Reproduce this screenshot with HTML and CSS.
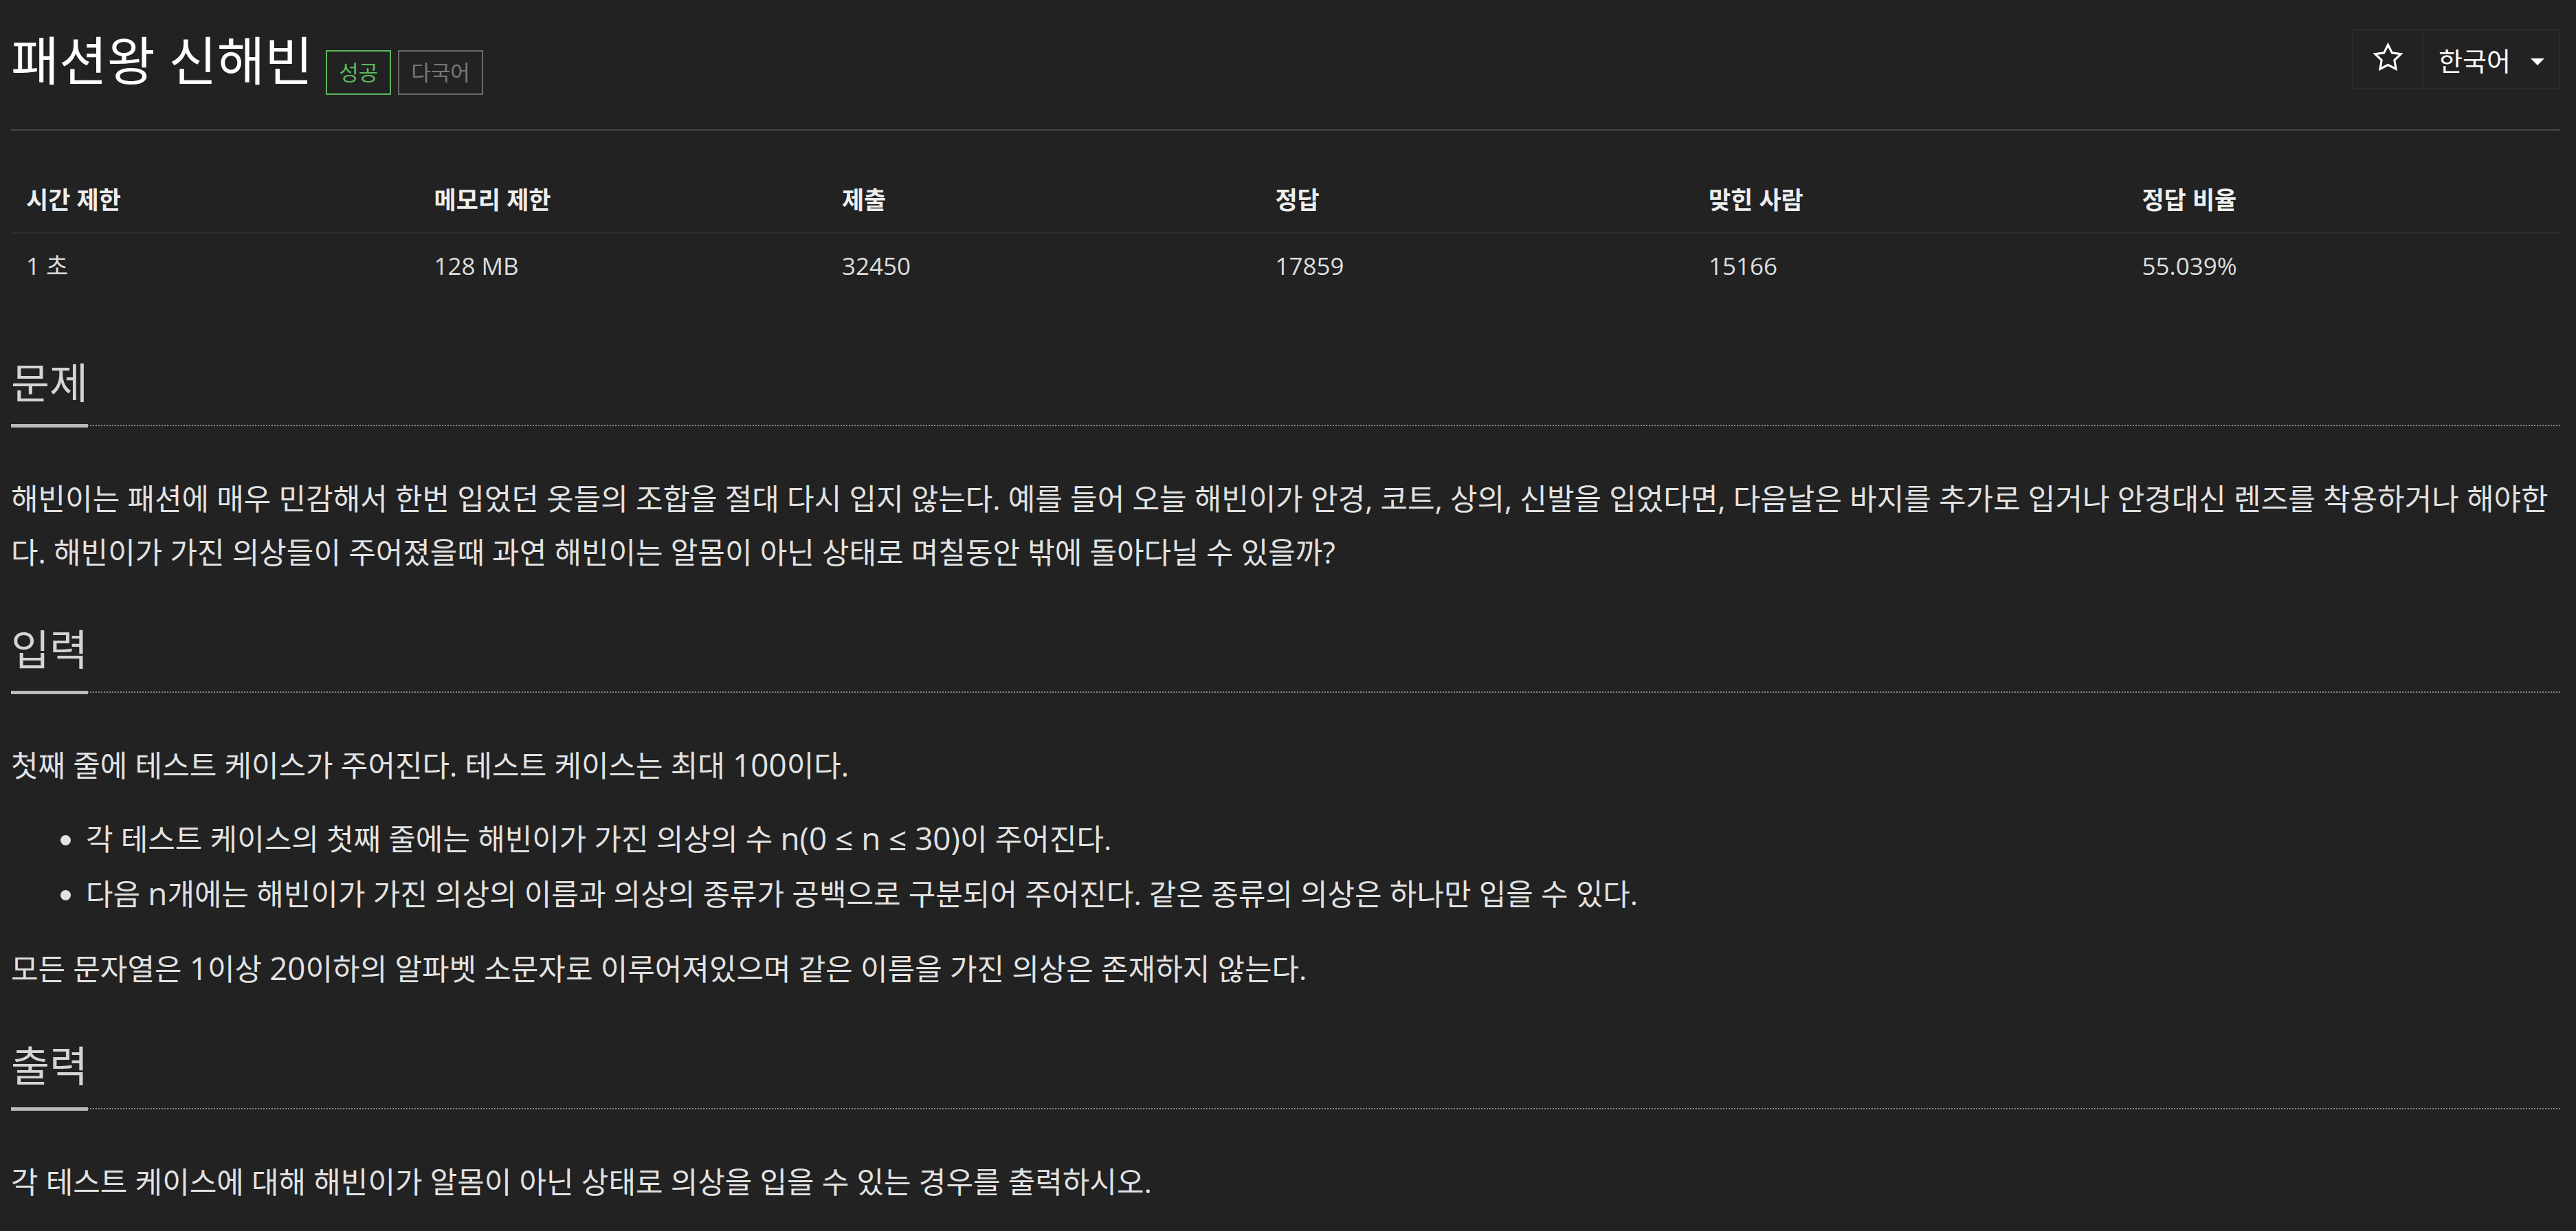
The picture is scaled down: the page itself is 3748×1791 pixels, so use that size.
FILE: index.html
```html
<!DOCTYPE html>
<html lang="ko">
<head>
<meta charset="utf-8">
<title>패션왕 신해빈</title>
<link rel="stylesheet" href="styles.css">
</head>
<body>
<div class="page">
  <header class="page-header">
    <h1 class="title">
      <span class="title-text">패션왕 신해빈</span>
      <span class="label label-ac">성공</span>
      <span class="label label-multi">다국어</span>
    </h1>
    <div class="btn-group">
      <button class="btn btn-star" type="button">
        <svg class="star" width="47" height="47" viewBox="0 0 24 24"><polygon points="12,2.6 14.95,8.6 21.5,9.5 16.75,14.1 17.9,20.6 12,17.5 6.1,20.6 7.25,14.1 2.5,9.5 9.05,8.6" fill="none" stroke="#fff" stroke-width="1.6" stroke-linejoin="miter"/></svg>
      </button>
      <button class="btn btn-lang" type="button"><span>한국어</span><span class="caret"></span></button>
    </div>
  </header>

  <table class="info">
    <thead>
      <tr>
        <th class="w16">시간 제한</th>
        <th class="w16">메모리 제한</th>
        <th class="w17">제출</th>
        <th class="w17">정답</th>
        <th class="w17">맞힌 사람</th>
        <th class="w17">정답 비율</th>
      </tr>
    </thead>
    <tbody>
      <tr>
        <td>1 초</td>
        <td>128 MB</td>
        <td>32450</td>
        <td>17859</td>
        <td>15166</td>
        <td>55.039%</td>
      </tr>
    </tbody>
  </table>

  <section class="problem-section">
    <div class="headline"><h2>문제</h2></div>
    <p>해빈이는 패션에 매우 민감해서 한번 입었던 옷들의 조합을 절대 다시 입지 않는다. 예를 들어 오늘 해빈이가 안경, 코트, 상의, 신발을 입었다면, 다음날은 바지를 추가로 입거나 안경대신 렌즈를 착용하거나 해야한다. 해빈이가 가진 의상들이 주어졌을때 과연 해빈이는 알몸이 아닌 상태로 며칠동안 밖에 돌아다닐 수 있을까?</p>
  </section>

  <section class="problem-section">
    <div class="headline"><h2>입력</h2></div>
    <p>첫째 줄에 테스트 케이스가 주어진다. 테스트 케이스는 최대 <span class="en">100</span>이다.</p>
    <ul>
      <li>각 테스트 케이스의 첫째 줄에는 해빈이가 가진 의상의 수 <span class="en">n(0 ≤ n ≤ 30)</span>이 주어진다.</li>
      <li>다음 <span class="en">n</span>개에는 해빈이가 가진 의상의 이름과 의상의 종류가 공백으로 구분되어 주어진다. 같은 종류의 의상은 하나만 입을 수 있다.</li>
    </ul>
    <p>모든 문자열은 <span class="en">1</span>이상 <span class="en">20</span>이하의 알파벳 소문자로 이루어져있으며 같은 이름을 가진 의상은 존재하지 않는다.</p>
  </section>

  <section class="problem-section">
    <div class="headline"><h2>출력</h2></div>
    <p>각 테스트 케이스에 대해 해빈이가 알몸이 아닌 상태로 의상을 입을 수 있는 경우를 출력하시오.</p>
  </section>
</div>
</body>
</html>
```

FILE: styles.css
```css
html, body {
  background: #222222;
}

body {
  margin: 0;
  padding: 0 23px 0 16px;
  color: #e2e2e2;
  font-family: "Open Sans", "Noto Sans CJK KR", sans-serif;
}

/* ---------- header ---------- */
.page-header {
  display: flex;
  justify-content: space-between;
  align-items: flex-start;
  padding: 42px 0 50px;
  border-bottom: 2px solid #474747;
}

.title {
  display: flex;
  align-items: baseline;
  margin: 2px 0 0;
  font-weight: 400;
  color: #ffffff;
}

.title-text {
  font-size: 76px;
  line-height: 87px;
}

.label {
  font-size: 31px;
  line-height: 61px;
  padding: 0 17px;
  border: 2px solid;
  margin-left: 10px;
}

.label-ac {
  color: #5cb85c;
  border-color: #5cb85c;
  margin-left: 19px;
}

.label-multi {
  color: #777777;
  border-color: #6b6b6b;
}

.btn-group {
  display: flex;
  box-sizing: border-box;
  height: 88px;
  border: 2px solid #2c2c2c;
}

.btn {
  display: flex;
  align-items: center;
  padding: 0;
  border: 0;
  background: transparent;
  color: #ffffff;
  font-family: inherit;
}

.btn-star {
  width: 100px;
  justify-content: center;
}

.star {
  margin-top: -6px;
}

.btn-lang {
  border-left: 2px solid #2c2c2c;
  padding: 0 21px 0 22px;
  font-size: 38px;
}

.caret {
  width: 0;
  height: 0;
  border-top: 10px solid #ffffff;
  border-left: 10px solid transparent;
  border-right: 10px solid transparent;
  margin: 8px 0 0 29px;
}

/* ---------- info table ---------- */
.info {
  width: 100%;
  table-layout: fixed;
  border-collapse: collapse;
  margin: 55px 0 49px;
}

.info th {
  box-sizing: border-box;
  font-size: 35px;
  font-weight: 700;
  color: #eeeeee;
  text-align: left;
  line-height: 50px;
  padding: 21px 22px 22px;
  border-bottom: 2px solid #2e2e2e;
}

.info td {
  font-size: 35px;
  line-height: 50px;
  padding: 22px;
  color: #dddddd;
}

.w16 { width: 16%; }
.w17 { width: 17%; }

/* ---------- problem sections ---------- */
.problem-section {
  display: flex;
  flex-direction: column;
}

.headline {
  display: flex;
  margin: 42px 0 67px;
  border-bottom: 2px dotted #8a8a8a;
}

.headline h2 {
  margin: 0 0 -4px;
  padding-bottom: 29px;
  font-size: 61px;
  line-height: 63px;
  font-weight: 400;
  color: #d4d4d4;
  border-bottom: 5px solid #bbbbbb;
}

.problem-section p {
  margin: 0 0 28px;
  font-size: 43px;
  line-height: 78px;
}

.problem-section ul {
  margin: 0 0 30px;
  padding-left: 109px;
  font-size: 43px;
  line-height: 80px;
}

.en {
  font-size: 1.065em;
  line-height: 1;
}
```
